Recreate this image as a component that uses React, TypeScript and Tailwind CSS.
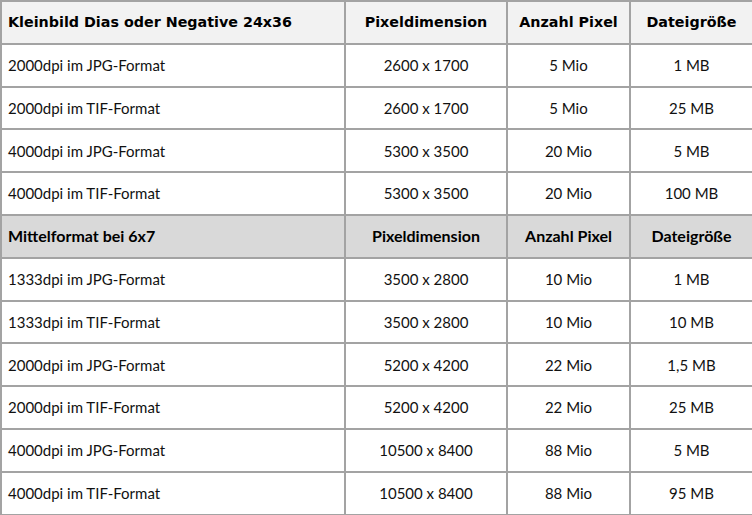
import React from 'react';

// Rows for the two table sections
const kleinbild = [
  ['2000dpi im JPG-Format', '2600 x 1700', '5 Mio', '1 MB'],
  ['2000dpi im TIF-Format', '2600 x 1700', '5 Mio', '25 MB'],
  ['4000dpi im JPG-Format', '5300 x 3500', '20 Mio', '5 MB'],
  ['4000dpi im TIF-Format', '5300 x 3500', '20 Mio', '100 MB'],
];

const mittelformat = [
  ['1333dpi im JPG-Format', '3500 x 2800', '10 Mio', '1 MB'],
  ['1333dpi im TIF-Format', '3500 x 2800', '10 Mio', '10 MB'],
  ['2000dpi im JPG-Format', '5200 x 4200', '22 Mio', '1,5 MB'],
  ['2000dpi im TIF-Format', '5200 x 4200', '22 Mio', '25 MB'],
  ['4000dpi im JPG-Format', '10500 x 8400', '88 Mio', '5 MB'],
  ['4000dpi im TIF-Format', '10500 x 8400', '88 Mio', '95 MB'],
];

const cell = 'border-2 border-[#a3a3a3] h-[42.8px] p-0 align-middle';

const BodyRow = ({ row }: { row: string[] }) => (
  <tr>
    <td className={`${cell} pl-[6px] text-left`}>{row[0]}</td>
    <td className={`${cell} text-center`}>{row[1]}</td>
    <td className={`${cell} text-center`}>{row[2]}</td>
    <td className={`${cell} text-center`}>{row[3]}</td>
  </tr>
);

const App = () => {
  return (
    <div className="w-[752px] h-[515px] bg-white overflow-hidden">
      <table
        className="w-[752px] border-collapse table-fixed text-[15px] text-[#111] border-2 border-[#5a5a5a] border-b-[#a3a3a3]"
        style={{ fontFamily: 'Lato, "Open Sans", sans-serif' }}
      >
        <colgroup>
          <col className="w-[344px]" />
          <col className="w-[162px]" />
          <col className="w-[123px]" />
          <col className="w-[123px]" />
        </colgroup>
        <tbody>
          {/* First section header, Verdana-like bold */}
          <tr
            className="bg-[#f2f2f2] font-bold text-[14.3px] text-black"
            style={{ fontFamily: '"DejaVu Sans", Verdana, sans-serif' }}
          >
            <td className={`${cell} pl-[6px] text-left`}>Kleinbild Dias oder Negative 24x36</td>
            <td className={`${cell} text-center`}>Pixeldimension</td>
            <td className={`${cell} text-center`}>Anzahl Pixel</td>
            <td className={`${cell} text-center`}>Dateigröße</td>
          </tr>
          {kleinbild.map((row, i) => (
            <BodyRow key={i} row={row} />
          ))}

          {/* Second section header */}
          <tr className="bg-[#d9d9d9] font-bold text-[16px] text-black">
            <td className={`${cell} pl-[6px] text-left`}>Mittelformat bei 6x7</td>
            <td className={`${cell} text-center`}>Pixeldimension</td>
            <td className={`${cell} text-center`}>Anzahl Pixel</td>
            <td className={`${cell} text-center`}>Dateigröße</td>
          </tr>
          {mittelformat.map((row, i) => (
            <BodyRow key={i} row={row} />
          ))}
        </tbody>
      </table>
    </div>
  );
};

export default App;
